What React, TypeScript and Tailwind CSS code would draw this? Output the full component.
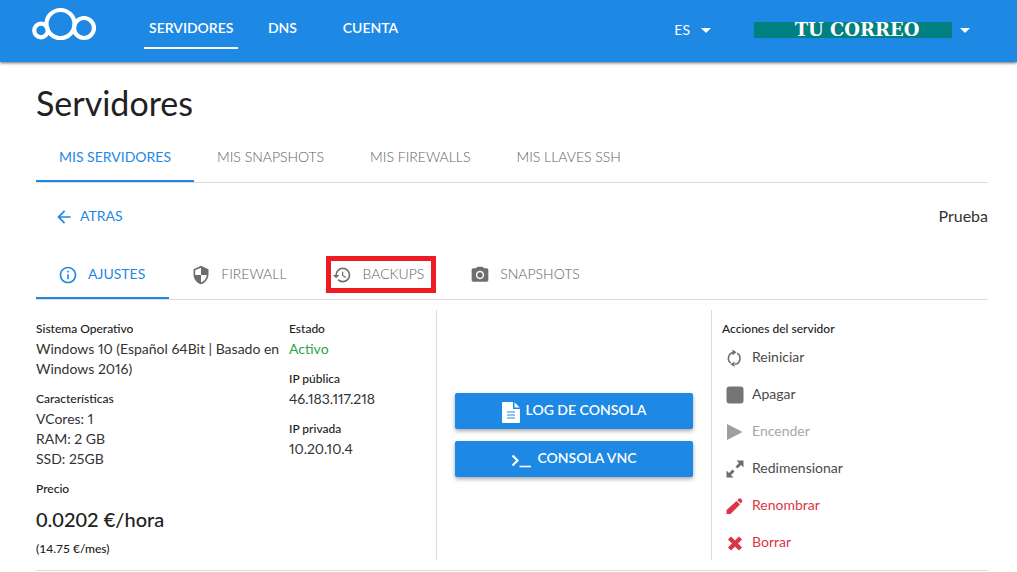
import type { ReactNode } from 'react';
import {
  MdArrowBack,
  MdArrowDropDown,
  MdHistory,
  MdInfoOutline,
  MdPhotoCamera,
  MdSecurity,
} from 'react-icons/md';

function Logo() {
  return (
    <svg viewBox="0 0 64 34" className="h-[34px] w-16" fill="none" stroke="#fff" aria-hidden="true">
      <circle cx="9" cy="23.500" r="6.800" strokeWidth="4.200" />
      <circle cx="52" cy="21" r="10" strokeWidth="4.200" />
      <circle cx="28.500" cy="17" r="14" strokeWidth="4.200" />
    </svg>
  );
}

function NavLink({ label, active = false }: { label: string; active?: boolean }) {
  return (
    <a
      href="#"
      className={`flex h-9 min-w-[88px] items-center justify-center border-b-2 px-[5px] pb-1 text-sm font-semibold ${
        active ? 'border-white' : 'border-transparent'
      }`}
    >
      {label}
    </a>
  );
}

function Header() {
  return (
    <header className="flex h-[62px] items-start bg-[#1e88e5] pr-10 pl-8 text-white shadow-[0_1px_3px_rgba(0,0,0,0.6)]">
      <a href="#" aria-label="Inicio" className="mt-[7px] mr-12">
        <Logo />
      </a>
      <nav className="mt-[13px] flex">
        <NavLink label="SERVIDORES" active />
        <NavLink label="DNS" />
        <NavLink label="CUENTA" />
      </nav>
      <div className="mt-[18px] ml-auto flex h-6 items-center">
        <button type="button" className="mr-9 flex items-center gap-1 text-sm">
          ES
          <MdArrowDropDown size={24} />
        </button>
        <button type="button" className="flex items-center gap-[1px]">
          <span className="flex h-4 w-[198px] items-center justify-center bg-[#008080] pl-2 font-['DejaVu_Serif',serif] text-lg leading-4 font-bold">
            TU CORREO
          </span>
          <MdArrowDropDown size={24} />
        </button>
      </div>
    </header>
  );
}

function SectionTab({ label, active = false }: { label: string; active?: boolean }) {
  return (
    <a
      href="#"
      className={`flex h-[50px] items-center border-b-2 px-[23px] pt-[2px] text-sm ${
        active ? 'border-[#1e88e5] font-normal text-[#1e88e5]' : 'border-transparent font-light text-[#616161]'
      }`}
    >
      {label}
    </a>
  );
}

function ServerTab({
  label,
  icon,
  active = false,
  marked = false,
}: {
  label: string;
  icon: ReactNode;
  active?: boolean;
  marked?: boolean;
}) {
  return (
    <a
      href="#"
      className={`relative flex h-[50px] items-center gap-[10px] border-b-2 pt-[2px] pr-6 pl-[22px] text-sm ${
        active ? 'border-[#1e88e5] font-normal text-[#1e88e5]' : 'border-transparent font-light text-[#616161]'
      }`}
    >
      <span className={active ? 'pt-[2px]' : 'pt-[2px] text-[#6e6e6e]'}>{icon}</span>
      {label}
      {marked && (
        <span className="absolute top-[7px] right-3 left-4 h-[37px] border-[5px] border-[#ed1c24]" />
      )}
    </a>
  );
}

function Field({ label, children }: { label: string; children: ReactNode }) {
  return (
    <div className="mb-[10px]">
      <dt className="text-xs leading-5 font-medium">{label}</dt>
      <dd className="text-sm leading-5 text-[#333] proportional-nums">{children}</dd>
    </div>
  );
}

function Action({
  label,
  icon,
  tone = 'text-[#4a4a4a]',
  disabled = false,
}: {
  label: string;
  icon: ReactNode;
  tone?: string;
  disabled?: boolean;
}) {
  return (
    <li className="flex h-[37px] items-center">
      <button type="button" disabled={disabled} className={`flex items-center gap-2 text-sm ${tone}`}>
        <svg viewBox="0 0 18 18" className="mt-[3px] h-[18px] w-[18px]" aria-hidden="true">
          {icon}
        </svg>
        {label}
      </button>
    </li>
  );
}

function ConsoleButton({ label, icon }: { label: string; icon: ReactNode }) {
  return (
    <button
      type="button"
      className="flex h-9 items-center justify-center gap-[6px] rounded-[2px] bg-[#1e88e5] pb-[2px] text-sm font-semibold text-white shadow-[0_2px_4px_rgba(0,0,0,0.35)]"
    >
      {icon}
      {label}
    </button>
  );
}

export default function App() {
  return (
    <div className="bg-white font-['Lato','Open_Sans',sans-serif] text-[#212121]">
      <Header />
      <main className="pr-[29px] pl-9">
        <h1 className="pt-[21px] text-[34px] leading-10">Servidores</h1>
        <nav className="mt-[9px] flex border-b border-[#dcdcdc]">
          <SectionTab label="MIS SERVIDORES" active />
          <SectionTab label="MIS SNAPSHOTS" />
          <SectionTab label="MIS FIREWALLS" />
          <SectionTab label="MIS LLAVES SSH" />
        </nav>
        <div className="flex h-[66px] items-center justify-between">
          <a href="#" className="flex items-center gap-[6px] pl-[18px] text-sm text-[#1e88e5]">
            <MdArrowBack size={20} className="mt-[2px]" />
            ATRAS
          </a>
          <h2 className="text-base text-[#333]">Prueba</h2>
        </div>
        <nav className="flex border-b border-[#dcdcdc]">
          <ServerTab label="AJUSTES" icon={<MdInfoOutline size={20} />} active />
          <ServerTab label="FIREWALL" icon={<MdSecurity size={20} />} />
          <ServerTab label="BACKUPS" icon={<MdHistory size={20} />} marked />
          <ServerTab label="SNAPSHOTS" icon={<MdPhotoCamera size={20} />} />
        </nav>

        <section className="mt-[10px] grid grid-cols-[401fr_275fr_276fr] border-b border-[#dcdcdc] pb-[10px]">
          <div className="grid h-[250px] grid-cols-[253fr_147fr] border-r border-[#dcdcdc] pt-[9px]">
            <dl>
              <Field label="Sistema Operativo">
                Windows 10 (Español 64Bit | Basado en Windows 2016)
              </Field>
              <Field label="Características">
                <p>VCores: 1</p>
                <p>RAM: 2 GB</p>
                <p>SSD: 25GB</p>
              </Field>
              <div>
                <dt className="text-xs leading-5 font-medium">Precio</dt>
                <dd className="font-medium">
                  <p className="pt-[2px] pb-[2px] text-xl leading-9">0.0202 €/hora</p>
                  <p className="text-xs leading-5">(14.75 €/mes)</p>
                </dd>
              </div>
            </dl>
            <dl>
              <Field label="Estado">
                <span className="text-[#28a745]">Activo</span>
              </Field>
              <Field label="IP pública">46.183.117.218</Field>
              <Field label="IP privada">10.20.10.4</Field>
            </dl>
          </div>

          <div className="flex flex-col gap-3 border-r border-[#dcdcdc] px-[18px] pt-[83px]">
            <ConsoleButton
              label="LOG DE CONSOLA"
              icon={
                <svg viewBox="0 0 18 21" className="mt-1 h-[21px] w-[18px]" aria-hidden="true">
                  <path fill="#fff" d="M1 0h10v7h7v13a1 1 0 0 1-1 1H1a1 1 0 0 1-1-1V1a1 1 0 0 1 1-1zM12.500 0.300V5.500h5.200z" />
                  <path stroke="#1e88e5" strokeWidth="1.200" d="M5 10h8M5 13h8M5 16h8" />
                </svg>
              }
            />
            <ConsoleButton
              label="CONSOLA VNC"
              icon={
                <svg viewBox="0 0 20 14" className="mt-[6px] h-[14px] w-5" fill="none" stroke="#fff" aria-hidden="true">
                  <path strokeWidth="2.200" d="M1.500 1.500l5 5-5 5" />
                  <path strokeWidth="1.600" d="M8.500 12.500H20" />
                </svg>
              }
            />
          </div>

          <div className="pt-[9px] pl-[10px]">
            <h3 className="text-xs leading-5 font-medium">Acciones del servidor</h3>
            <ul className="-mt-[1px] pl-1">
              <Action
                label="Reiniciar"
                icon={
                  <g fill="none" stroke="#6e6e6e" strokeWidth="1.600">
                    <path d="M4.800 14.200A6 6 0 0 1 7.500 3.500M11.200 4.300A6 6 0 0 1 9 15.300" />
                    <path fill="#6e6e6e" stroke="none" d="M6.500 0.500L10.500 3.300 6.500 6.300zM8.500 12.500v5.500L4.500 15.300z" />
                  </g>
                }
              />
              <Action label="Apagar" icon={<rect x="0.500" y="0.500" width="17" height="17" rx="3" fill="#757575" />} />
              <Action
                label="Encender"
                tone="text-[#a8a8a8]"
                disabled
                icon={<path fill="#9e9e9e" d="M1 1v16l15.500-8z" />}
              />
              <Action
                label="Redimensionar"
                icon={
                  <g fill="#6e6e6e">
                    <path d="M10.500 0.500h7v7l-2.500-2.500-3.500 3.500-2-2L13 3z" />
                    <path d="M7.500 17.500h-7v-7L3 13l3.500-3.500 2 2L5 15z" />
                  </g>
                }
              />
              <Action
                label="Renombrar"
                tone="text-[#dc3545]"
                icon={
                  <g fill="#dc3545">
                    <path d="M0.500 17v-4L10.500 4l3.500 3.500L4.500 17z" />
                    <path d="M11.300 3.200l1.700-1.600q.8-.7 1.600 0l1.400 1.500q.7.800 0 1.600L14.700 6.500z" />
                  </g>
                }
              />
              <Action
                label="Borrar"
                tone="text-[#dc3545]"
                icon={<path stroke="#dc3545" strokeWidth="4.400" d="M3.500 4l11 11M14.500 4l-11 11" />}
              />
            </ul>
          </div>
        </section>
      </main>
    </div>
  );
}
